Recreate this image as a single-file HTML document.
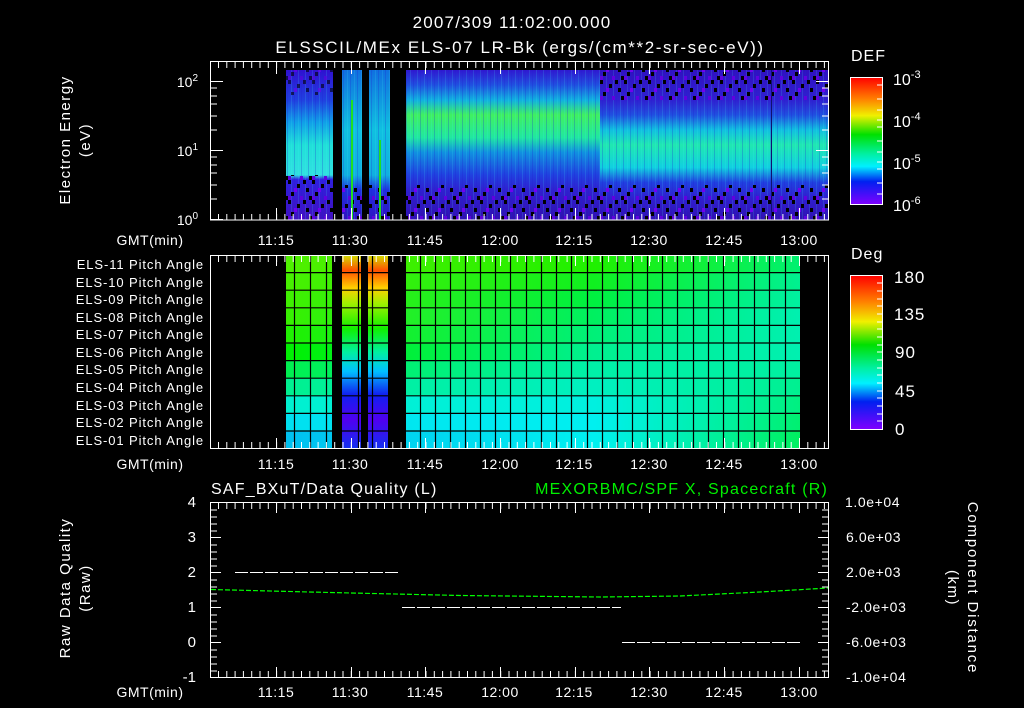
<!DOCTYPE html>
<html><head><meta charset="utf-8"><style>
html,body{margin:0;padding:0;background:#000;width:1024px;height:708px;overflow:hidden}
svg{display:block}
text{font-family:"Liberation Sans",sans-serif;fill:#fff}
</style></head><body>
<svg width="1024" height="708" viewBox="0 0 1024 708" xmlns="http://www.w3.org/2000/svg">
<defs>
 <linearGradient id="cb" x1="0" y1="0" x2="0" y2="1">
  <stop offset="0" stop-color="#ff0000"/><stop offset="0.17" stop-color="#ff8000"/>
  <stop offset="0.3" stop-color="#f0f000"/><stop offset="0.45" stop-color="#00e000"/>
  <stop offset="0.6" stop-color="#00f0a0"/><stop offset="0.7" stop-color="#00f0ff"/>
  <stop offset="0.82" stop-color="#0020f0"/><stop offset="1" stop-color="#8000ff"/>
 </linearGradient>
 <linearGradient id="sA" x1="0" y1="70" x2="0" y2="220" gradientUnits="userSpaceOnUse">
  <stop offset="0" stop-color="#3010d0"/><stop offset="0.2" stop-color="#2040e0"/>
  <stop offset="0.35" stop-color="#10a0e8"/><stop offset="0.5" stop-color="#20e0d8"/>
  <stop offset="0.7" stop-color="#30e0e0"/><stop offset="0.73" stop-color="#3020e0"/>
  <stop offset="1" stop-color="#4010c0"/>
 </linearGradient>
 <linearGradient id="sB" x1="0" y1="70" x2="0" y2="220" gradientUnits="userSpaceOnUse">
  <stop offset="0" stop-color="#1070e0"/><stop offset="0.4" stop-color="#10c0e0"/>
  <stop offset="0.7" stop-color="#10b0e0"/><stop offset="0.8" stop-color="#2030e0"/>
  <stop offset="1" stop-color="#3010c0"/>
 </linearGradient>
 <linearGradient id="sD" x1="0" y1="70" x2="0" y2="220" gradientUnits="userSpaceOnUse">
  <stop offset="0" stop-color="#3018d0"/><stop offset="0.1" stop-color="#2050e0"/>
  <stop offset="0.2" stop-color="#10b0e0"/><stop offset="0.3" stop-color="#40f060"/>
  <stop offset="0.45" stop-color="#20e8a0"/><stop offset="0.55" stop-color="#1090e0"/>
  <stop offset="0.7" stop-color="#2040e0"/><stop offset="0.8" stop-color="#3020d0"/>
  <stop offset="1" stop-color="#3010b0"/>
 </linearGradient>
 <linearGradient id="sE" x1="0" y1="70" x2="0" y2="220" gradientUnits="userSpaceOnUse">
  <stop offset="0" stop-color="#3010c0"/><stop offset="0.2" stop-color="#3020d0"/>
  <stop offset="0.3" stop-color="#2050e0"/><stop offset="0.4" stop-color="#10c0e0"/>
  <stop offset="0.5" stop-color="#20e8b0"/><stop offset="0.65" stop-color="#10d0e0"/>
  <stop offset="0.75" stop-color="#2040e0"/><stop offset="0.85" stop-color="#3020d0"/>
  <stop offset="1" stop-color="#3010b0"/>
 </linearGradient>
 <pattern id="spk" x="0" y="0" width="24" height="20" patternUnits="userSpaceOnUse">
  <rect x="0" y="0" width="3" height="4" fill="#000"/><rect x="9" y="4" width="3" height="4" fill="#000"/>
  <rect x="15" y="0" width="3" height="4" fill="#000"/><rect x="3" y="12" width="3" height="4" fill="#000"/>
  <rect x="18" y="8" width="3" height="4" fill="#000"/><rect x="12" y="16" width="3" height="4" fill="#6000e0"/>
  <rect x="21" y="16" width="3" height="4" fill="#000"/><rect x="6" y="8" width="3" height="4" fill="#7000f0"/>
  <rect x="0" y="16" width="3" height="4" fill="#6000e0"/>
 </pattern>
 <pattern id="vstr" x="0" y="0" width="7" height="4" patternUnits="userSpaceOnUse">
  <rect x="0" width="1" height="4" fill="#2020d0" opacity="0.25"/><rect x="4" width="1" height="4" fill="#40f0f0" opacity="0.15"/>
 </pattern>
 <linearGradient id="col" x1="0" y1="255" x2="0" y2="449" gradientUnits="userSpaceOnUse">
  <stop offset="0" stop-color="#d0e000"/><stop offset="0.08" stop-color="#ff5000"/>
  <stop offset="0.17" stop-color="#ffd000"/><stop offset="0.25" stop-color="#a0f000"/>
  <stop offset="0.38" stop-color="#10f000"/><stop offset="0.5" stop-color="#00f0a0"/>
  <stop offset="0.6" stop-color="#00c0ff"/><stop offset="0.72" stop-color="#1020f0"/>
  <stop offset="0.85" stop-color="#5000f0"/><stop offset="1" stop-color="#1030f0"/>
 </linearGradient>
 <linearGradient id="r1" x1="286" x2="800" gradientUnits="userSpaceOnUse"><stop offset="0" stop-color="#50f000"/><stop offset="0.6" stop-color="#20f000"/><stop offset="1" stop-color="#00f070"/></linearGradient>
 <linearGradient id="r2" x1="286" x2="800" gradientUnits="userSpaceOnUse"><stop offset="0" stop-color="#48f000"/><stop offset="0.6" stop-color="#10f020"/><stop offset="1" stop-color="#00f090"/></linearGradient>
 <linearGradient id="r3" x1="286" x2="800" gradientUnits="userSpaceOnUse"><stop offset="0" stop-color="#40f000"/><stop offset="0.6" stop-color="#00f040"/><stop offset="1" stop-color="#00f0a0"/></linearGradient>
 <linearGradient id="r4" x1="286" x2="800" gradientUnits="userSpaceOnUse"><stop offset="0" stop-color="#38f000"/><stop offset="0.6" stop-color="#00f060"/><stop offset="1" stop-color="#00f0b0"/></linearGradient>
 <linearGradient id="r5" x1="286" x2="800" gradientUnits="userSpaceOnUse"><stop offset="0" stop-color="#20f000"/><stop offset="0.6" stop-color="#00f078"/><stop offset="1" stop-color="#00f0b0"/></linearGradient>
 <linearGradient id="r6" x1="286" x2="800" gradientUnits="userSpaceOnUse"><stop offset="0" stop-color="#00f000"/><stop offset="0.6" stop-color="#00f090"/><stop offset="1" stop-color="#00f0b0"/></linearGradient>
 <linearGradient id="r7" x1="286" x2="800" gradientUnits="userSpaceOnUse"><stop offset="0" stop-color="#00f050"/><stop offset="0.6" stop-color="#00f0a8"/><stop offset="1" stop-color="#00f0a0"/></linearGradient>
 <linearGradient id="r8" x1="286" x2="800" gradientUnits="userSpaceOnUse"><stop offset="0" stop-color="#00f090"/><stop offset="0.6" stop-color="#00f0c0"/><stop offset="1" stop-color="#00f090"/></linearGradient>
 <linearGradient id="r9" x1="286" x2="800" gradientUnits="userSpaceOnUse"><stop offset="0" stop-color="#00f0d0"/><stop offset="0.6" stop-color="#00f0e0"/><stop offset="1" stop-color="#00f080"/></linearGradient>
 <linearGradient id="r10" x1="286" x2="800" gradientUnits="userSpaceOnUse"><stop offset="0" stop-color="#00e0f0"/><stop offset="0.6" stop-color="#00f0f0"/><stop offset="1" stop-color="#00f070"/></linearGradient>
 <linearGradient id="r11" x1="286" x2="800" gradientUnits="userSpaceOnUse"><stop offset="0" stop-color="#00c0f0"/><stop offset="0.6" stop-color="#00f0f0"/><stop offset="1" stop-color="#00f060"/></linearGradient>
</defs>

<!-- titles -->
<text x="512" y="28" font-size="17" letter-spacing="1.2" text-anchor="middle">2007/309 11:02:00.000</text>
<text x="520" y="53" font-size="17" letter-spacing="1.6" text-anchor="middle">ELSSCIL/MEx ELS-07 LR-Bk  (ergs/(cm**2-sr-sec-eV))</text>

<!-- PANEL 1 -->
<rect x="286" y="70" width="47" height="150" fill="url(#sA)"/>
<rect x="342" y="70" width="20" height="150" fill="url(#sB)"/>
<rect x="369" y="70" width="21" height="150" fill="url(#sB)"/>
<rect x="406" y="70" width="194" height="150" fill="url(#sD)"/>
<rect x="600" y="70" width="228" height="150" fill="url(#sE)"/>
<rect x="286" y="70" width="542" height="150" fill="url(#vstr)"/>
<rect x="333" y="70" width="9" height="150" fill="#000"/>
<rect x="362" y="70" width="7" height="150" fill="#000"/>
<rect x="390" y="70" width="16" height="150" fill="#000"/>
<rect x="286" y="175" width="47" height="45" fill="url(#spk)"/>
<rect x="342" y="185" width="20" height="35" fill="url(#spk)"/>
<rect x="369" y="185" width="21" height="35" fill="url(#spk)"/>
<rect x="406" y="185" width="422" height="35" fill="url(#spk)"/>
<rect x="286" y="70" width="47" height="25" fill="url(#spk)" opacity="0.6"/>
<rect x="600" y="70" width="228" height="30" fill="url(#spk)"/>
<rect x="351" y="100" width="2" height="120" fill="#20e020"/>
<rect x="379" y="140" width="2" height="80" fill="#20e020"/>
<rect x="771" y="70" width="1" height="150" fill="#101070"/>
<rect x="210.5" y="61.5" width="618" height="158.5" fill="none" stroke="#fff"/>
<g stroke="#fff" fill="none">
<path d="M218 65H828M218 217H828" stroke-width="6" stroke-dasharray="1 7.3"/>
<path d="M276.5 62v12M351.5 62v12M425.5 62v12M500.5 62v12M575.5 62v12M649.5 62v12M724.5 62v12M799.5 62v12"/>
<path d="M276.5 220v-12M351.5 220v-12M425.5 220v-12M500.5 220v-12M575.5 220v-12M649.5 220v-12M724.5 220v-12M799.5 220v-12"/>
<path d="M211 81.5h12M211 150.5h12M211 219.5h12M211 88h6M211 96h6M211 104h6M211 116h6M211 130h6M211 157h6M211 165h6M211 173h6M211 185h6M211 199h6"/>
<path d="M828 81.5h-12M828 150.5h-12M828 88h-6M828 96h-6M828 104h-6M828 116h-6M828 130h-6M828 157h-6M828 165h-6M828 173h-6M828 185h-6M828 199h-6"/>
</g>
<text x="198" y="87" font-size="14" text-anchor="end">10<tspan font-size="10" dy="-6">2</tspan></text>
<text x="198" y="156" font-size="14" text-anchor="end">10<tspan font-size="10" dy="-6">1</tspan></text>
<text x="198" y="225" font-size="14" text-anchor="end">10<tspan font-size="10" dy="-6">0</tspan></text>
<text transform="translate(70,140) rotate(-90)" font-size="15" letter-spacing="1.5" text-anchor="middle">Electron Energy</text>
<text transform="translate(90,140) rotate(-90)" font-size="15" letter-spacing="1.5" text-anchor="middle">(eV)</text>
<g font-size="14" text-anchor="middle" letter-spacing="0.5">
<text x="150" y="245">GMT(min)</text>
<text x="276" y="245">11:15</text><text x="350" y="245">11:30</text><text x="425" y="245">11:45</text>
<text x="500" y="245">12:00</text><text x="574" y="245">12:15</text><text x="649" y="245">12:30</text>
<text x="724" y="245">12:45</text><text x="799" y="245">13:00</text>
</g>
<text x="851" y="61" font-size="16" letter-spacing="1">DEF</text>
<rect x="850.5" y="77.5" width="32" height="127" fill="url(#cb)" stroke="#fff"/>
<g stroke="#fff"><path d="M882 85h-5M882 99h-5M882 110h-5M882 120h-5M882 127h-5M882 141h-5M882 152h-5M882 162h-5M882 169h-5M882 183h-5M882 194h-5"/></g>
<g font-size="16"><text x="893" y="85">10<tspan font-size="11" dy="-7">-3</tspan></text>
<text x="893" y="127">10<tspan font-size="11" dy="-7">-4</tspan></text>
<text x="893" y="169">10<tspan font-size="11" dy="-7">-5</tspan></text>
<text x="893" y="211">10<tspan font-size="11" dy="-7">-6</tspan></text></g>

<!-- PANEL 2 -->
<g>
<rect x="286" y="255" width="514" height="18" fill="url(#r1)"/>
<rect x="286" y="272.6" width="514" height="18" fill="url(#r2)"/>
<rect x="286" y="290.2" width="514" height="18" fill="url(#r3)"/>
<rect x="286" y="307.8" width="514" height="18" fill="url(#r4)"/>
<rect x="286" y="325.4" width="514" height="18" fill="url(#r5)"/>
<rect x="286" y="343" width="514" height="18" fill="url(#r6)"/>
<rect x="286" y="360.6" width="514" height="18" fill="url(#r7)"/>
<rect x="286" y="378.2" width="514" height="18" fill="url(#r8)"/>
<rect x="286" y="395.8" width="514" height="18" fill="url(#r9)"/>
<rect x="286" y="413.4" width="514" height="18" fill="url(#r10)"/>
<rect x="286" y="431" width="514" height="18" fill="url(#r11)"/>
</g>
<rect x="332" y="255" width="10" height="194" fill="#000"/>
<rect x="342" y="255" width="19" height="194" fill="url(#col)"/>
<rect x="361" y="255" width="7" height="194" fill="#000"/>
<rect x="368" y="255" width="20" height="194" fill="url(#col)"/>
<rect x="388" y="255" width="18" height="194" fill="#000"/>
<g stroke="#000" stroke-width="1.2">
<path d="M286 272.6h514M286 290.2h514M286 307.8h514M286 325.4h514M286 343h514M286 360.6h514M286 378.2h514M286 395.8h514M286 413.4h514M286 431h514"/>
<path d="M294.5 255v194M310.5 255v194M326.5 255v194M358.5 255v194M372.5 255v194M420.5 255v194M435.5 255v194M450.5 255v194M465.5 255v194M480.5 255v194M495.5 255v194M510.5 255v194M526.5 255v194M541.5 255v194M556.5 255v194M571.5 255v194M587.5 255v194M602.5 255v194M617.5 255v194M632.5 255v194M647.5 255v194M662.5 255v194M677.5 255v194M693.5 255v194M708.5 255v194M723.5 255v194M738.5 255v194M754.5 255v194M769.5 255v194M785.5 255v194"/>
</g>
<rect x="210.5" y="255.5" width="618" height="193" fill="none" stroke="#fff"/>
<g stroke="#fff" fill="none">
<path d="M218 259H828M218 445H828" stroke-width="6" stroke-dasharray="1 7.3"/>
<path d="M276.5 256v10M351.5 256v10M425.5 256v10M500.5 256v10M575.5 256v10M649.5 256v10M724.5 256v10M799.5 256v10M276.5 448v-10M351.5 448v-10M425.5 448v-10M500.5 448v-10M575.5 448v-10M649.5 448v-10M724.5 448v-10M799.5 448v-10"/></g>
<g font-size="13" text-anchor="end" letter-spacing="0.9">
<text x="204" y="269">ELS-11 Pitch Angle</text><text x="204" y="287">ELS-10 Pitch Angle</text>
<text x="204" y="304">ELS-09 Pitch Angle</text><text x="204" y="322">ELS-08 Pitch Angle</text>
<text x="204" y="339">ELS-07 Pitch Angle</text><text x="204" y="357">ELS-06 Pitch Angle</text>
<text x="204" y="374">ELS-05 Pitch Angle</text><text x="204" y="392">ELS-04 Pitch Angle</text>
<text x="204" y="410">ELS-03 Pitch Angle</text><text x="204" y="427">ELS-02 Pitch Angle</text>
<text x="204" y="445">ELS-01 Pitch Angle</text>
</g>
<g font-size="14" text-anchor="middle" letter-spacing="0.5">
<text x="150" y="469">GMT(min)</text>
<text x="276" y="469">11:15</text><text x="350" y="469">11:30</text><text x="425" y="469">11:45</text>
<text x="500" y="469">12:00</text><text x="574" y="469">12:15</text><text x="649" y="469">12:30</text>
<text x="724" y="469">12:45</text><text x="799" y="469">13:00</text>
</g>
<text x="851" y="259" font-size="16" letter-spacing="1">Deg</text>
<rect x="850.5" y="275.5" width="32" height="154" fill="url(#cb)" stroke="#fff"/>
<g stroke="#fff"><path d="M882 283h-5M882 291h-5M882 299h-5M882 306h-5M882 314h-5M882 322h-5M882 329h-5M882 337h-5M882 345h-5M882 352h-5M882 360h-5M882 368h-5M882 375h-5M882 383h-5M882 391h-5M882 398h-5M882 406h-5M882 414h-5M882 421h-5"/></g>
<g font-size="17" letter-spacing="1"><text x="894" y="283">180</text><text x="894" y="320">135</text><text x="895" y="358">90</text><text x="895" y="397">45</text><text x="895" y="435">0</text></g>

<!-- PANEL 3 -->
<text x="211" y="494" font-size="16" letter-spacing="1.2">SAF_BXuT/Data Quality (L)</text>
<text x="828" y="494" font-size="16" letter-spacing="1.2" text-anchor="end" style="fill:#00f000">MEXORBMC/SPF X, Spacecraft (R)</text>
<rect x="210.5" y="502.5" width="618" height="175" fill="none" stroke="#fff"/>
<g stroke="#fff" fill="none">
<path d="M218 506H828M218 674H828" stroke-width="6" stroke-dasharray="1 7.3"/>
<path d="M276.5 503v10M351.5 503v10M425.5 503v10M500.5 503v10M575.5 503v10M649.5 503v10M724.5 503v10M799.5 503v10M276.5 677v-10M351.5 677v-10M425.5 677v-10M500.5 677v-10M575.5 677v-10M649.5 677v-10M724.5 677v-10M799.5 677v-10"/>
<path d="M211 537.5h10M211 572.5h10M211 607.5h10M211 642.5h10M211 510h6M211 517h6M211 524h6M211 531h6M211 545h6M211 552h6M211 559h6M211 566h6M211 580h6M211 587h6M211 594h6M211 601h6M211 615h6M211 622h6M211 629h6M211 636h6M211 650h6M211 657h6M211 664h6M211 671h6"/>
<path d="M828 537.5h-10M828 572.5h-10M828 607.5h-10M828 642.5h-10M828 510h-6M828 517h-6M828 524h-6M828 531h-6M828 545h-6M828 552h-6M828 559h-6M828 566h-6M828 580h-6M828 587h-6M828 594h-6M828 601h-6M828 615h-6M828 622h-6M828 629h-6M828 636h-6M828 650h-6M828 657h-6M828 664h-6M828 671h-6"/>
<path d="M235 572.5H400M402 607.5H621M622 642.5H800" stroke-dasharray="13,2"/>
</g>
<path d="M211 589.5L330 592.5L460 595.5L600 597L680 596L760 592L828 588" fill="none" stroke="#00ff00" stroke-width="1.2" stroke-dasharray="5,2"/>
<g font-size="15" text-anchor="end">
<text x="196" y="507">4</text><text x="196" y="542">3</text><text x="196" y="577">2</text>
<text x="196" y="612">1</text><text x="196" y="647">0</text><text x="196" y="682">-1</text>
</g>
<g font-size="14" letter-spacing="0.6">
<text x="845" y="507">1.0e+04</text><text x="846" y="542">6.0e+03</text><text x="846" y="577">2.0e+03</text>
<text x="846" y="612">-2.0e+03</text><text x="846" y="647">-6.0e+03</text><text x="846" y="682">-1.0e+04</text>
</g>
<text transform="translate(70,588) rotate(-90)" font-size="15" letter-spacing="1.5" text-anchor="middle">Raw Data Quality</text>
<text transform="translate(90,588) rotate(-90)" font-size="15" letter-spacing="1.5" text-anchor="middle">(Raw)</text>
<text transform="translate(968,588) rotate(90)" font-size="15" letter-spacing="1.8" text-anchor="middle">Component Distance</text>
<text transform="translate(948,588) rotate(90)" font-size="15" letter-spacing="1.5" text-anchor="middle">(km)</text>
<g font-size="14" text-anchor="middle" letter-spacing="0.5">
<text x="150" y="697">GMT(min)</text>
<text x="276" y="697">11:15</text><text x="350" y="697">11:30</text><text x="425" y="697">11:45</text>
<text x="500" y="697">12:00</text><text x="574" y="697">12:15</text><text x="649" y="697">12:30</text>
<text x="724" y="697">12:45</text><text x="799" y="697">13:00</text>
</g>
</svg>
</body></html>
